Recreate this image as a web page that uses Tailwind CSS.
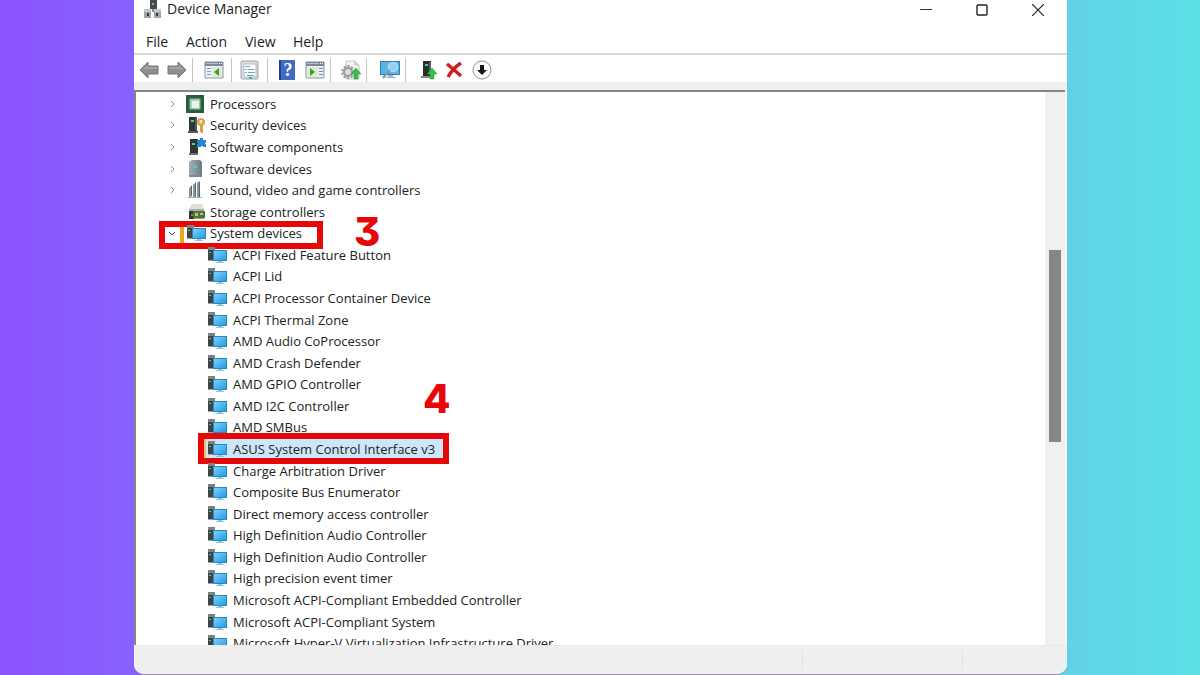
<!DOCTYPE html>
<html lang="en">
<head>
<meta charset="utf-8">
<meta name="viewport" content="width=device-width, initial-scale=1">
<title>Device Manager</title>
<script src="https://cdn.jsdelivr.net/npm/@tailwindcss/browser@4"></script>
</head>
<body class="h-screen overflow-hidden bg-linear-to-r/srgb from-[#8c52ff] to-[#5ce1e6] pr-[133px] pb-px pl-[134px] font-['Open_Sans','Noto_Sans',sans-serif] text-sm text-[#222]">
<svg class="absolute size-0" aria-hidden="true">
  <defs>
    <linearGradient id="screen" x1="0" y1="0" x2="1" y2="1"><stop offset="0" stop-color="#7cd0fa"/><stop offset="1" stop-color="#269be6"/></linearGradient>
    <linearGradient id="steel" x1="0" y1="0" x2="1" y2="0"><stop offset="0" stop-color="#a3adb4"/><stop offset="1" stop-color="#6f7b83"/></linearGradient>
    <symbol id="system" viewBox="0 0 20 18">
      <path d="M1 1h7v3H6v11H1z" fill="#3d4549"/><path d="M1 1h7v3H1z" fill="#7b8580"/><path d="M2 6h2v1H2z" fill="#62c9a2"/><path d="M1 14h5v1H1z" fill="#9aa3a6"/>
      <path d="M6 4h14v11H6z" fill="#2788bd"/><path d="M7 5h12v9H7z" fill="url(#screen)"/><path d="M11 15h4v1h2v1H9v-1h2z" fill="#8fc4dd"/>
    </symbol>
    <symbol id="processor" viewBox="0 0 20 18">
      <path d="M0 0h18v18H0z" fill="#2b6240"/><path d="M1 1h16v16H1z" fill="none" stroke="#23573a" stroke-width="2" stroke-dasharray="1 1"/><path d="M4 4h10v10H4z" fill="#b4d2c4" stroke="#8cb19c"/><path d="M6 6h7v7H6z" fill="#eaf4ef"/>
    </symbol>
    <symbol id="security" viewBox="0 0 20 18">
      <path d="M3 1h8v15H3z" fill="#303638"/><path d="M2 15h10v2H2z" fill="#555b5c"/><path d="M5 4h3v2H5z" fill="#4ad08b"/><path d="M9 2h2v12H9z" fill="#555d5e"/>
      <circle cx="15" cy="6" r="3" fill="#f2ca76" stroke="#d9a34f" stroke-width="2"/><path d="M14 9h3v8h-2v-1h-1z" fill="#d99f47"/><circle cx="15" cy="5" r="1" fill="#fff"/>
    </symbol>
    <symbol id="component" viewBox="0 0 20 18">
      <path d="M4 1h8v15H4z" fill="#303638"/><path d="M3 15h9v2H3z" fill="#6a7070"/><path d="M6 5h3v2H6z" fill="#4ad08b"/>
      <path d="M11 2h3V0h3v2h3v3h-1v1h1v3h-3V8h-2v1h-4V6h1V5h-1z" fill="#2686d2"/>
    </symbol>
    <symbol id="software" viewBox="0 0 20 18">
      <path d="M4 1l2-1h8l2 2v15H3V2z" fill="url(#steel)"/><path d="M3 15h13v2H3z" fill="#7b868d"/><path d="M7 5h4v3H7z" fill="#5ec5ba"/>
    </symbol>
    <symbol id="sound" viewBox="0 0 20 18">
      <path d="M3 7l3-3v11l-3 2zM7 4l3-3v15H7zM11 2l3-2v16h-3z" fill="#8797a1"/><path d="M5 5h1v10H5zM9 2h1v13H9zM13 1h1v15h-1z" fill="#566872"/><path d="M2 16h14v1H2z" fill="#a6adb1"/>
    </symbol>
    <symbol id="storage" viewBox="0 0 20 18">
      <path d="M5 2l2-1h9l2 5H3z" fill="#dfe0dc"/><path d="M3 6h15v3H3z" fill="#aab1a8"/><path d="M3 8h5v8H3z" fill="#2c3832"/><path d="M7 8h12v7H7z" fill="#3e7a43"/><path d="M9 10h3v3H9zM14 10h3v2h-3z" fill="#e1b85b"/><path d="M8 15h10v1H8z" fill="#d09437"/><path d="M5 11h2v2H5z" fill="#e25140"/>
    </symbol>
    <symbol id="chevron" viewBox="0 0 8 8"><path d="M3 1l3 3-3 3" fill="none" stroke="#8a8a8a"/></symbol>
    <symbol id="arrow" viewBox="0 0 20 18"><path d="M1 9l8-8v4h10v8H9v4z" fill="#8e8e8e" stroke="#777"/><path d="M3 9l5-5v2h10v2H8z" fill="#a5a5a5"/></symbol>
    <symbol id="console" viewBox="0 0 20 18"><path d="M1 1h18v16H1z" fill="#eef2f5" stroke="#8793a3"/><path d="M1 1h18v4H1z" fill="#7b889b"/><path d="M2 2h12v1H2z" fill="#b7c2cf"/><path d="M15 2h1v1h-1zM17 2h1v1h-1z" fill="#fff"/></symbol>
    <symbol id="up" viewBox="0 0 10 12"><path d="M5 0l5 6H7v5H3V6H0z" fill="#3dbb4b" stroke="#279737" stroke-width=".5"/></symbol>
  </defs>
</svg>
<main class="flex h-full flex-col overflow-hidden rounded-b-[10px] bg-white shadow-[0_1px_0_#9c94a3]">
  <header class="flex h-7 shrink-0 items-start justify-between pl-2">
    <div class="flex items-center gap-1">
      <svg class="h-[18px] w-5" viewBox="0 0 20 18"><path d="M8 0h7v9H8z" fill="#454b4e"/><path d="M10 3h2v2h-2z" fill="#83b7a4"/><path d="M10 9h2v3h-2z" fill="#888"/><path d="M2 9h7v9H2zM12 9h7v9h-7z" fill="#a2a5a8"/><path d="M2 9h7v3H2zM12 9h7v3h-7z" fill="#c4c7c9"/><path d="M5 13h2v3H5zM14 13h2v3h-2z" fill="#343a3d"/></svg>
      <h1 class="pl-px leading-[18px]">Device Manager</h1>
    </div>
    <div class="flex pr-px">
      <button aria-label="Minimize" class="flex h-5 w-14 items-center justify-center"><svg class="size-3" viewBox="0 0 12 12"><path d="M0 5.500h12" stroke="#333"/></svg></button>
      <button aria-label="Maximize" class="flex h-5 w-14 items-center justify-center"><svg class="size-3" viewBox="0 0 12 12"><rect x="1" y="1" width="10" height="10" rx="1" fill="none" stroke="#222" stroke-width="1.4"/></svg></button>
      <button aria-label="Close" class="flex h-5 w-14 items-center justify-center"><svg class="size-3" viewBox="0 0 12 12"><path d="M0 0l12 12M12 0L0 12" stroke="#222" stroke-width="1.2"/></svg></button>
    </div>
  </header>
  <nav class="flex h-[27px] shrink-0 items-center gap-5 border-b-2 border-[#d8d8d8] pt-[3px] pl-3 leading-5" aria-label="Menu">
    <button class="w-5">File</button><button class="w-[39px]">Action</button><button class="w-[28px]">View</button><button class="w-[28px]">Help</button>
  </nav>
  <div class="flex h-[27px] shrink-0 items-center pt-[3px] pl-[5px]" role="toolbar" aria-label="Tools">
    <button aria-label="Back"><svg class="h-[18px] w-5"><use href="#arrow"/></svg></button>
    <button aria-label="Forward" class="ml-2"><svg class="h-[18px] w-5 -scale-x-100"><use href="#arrow"/></svg></button>
    <span class="ml-[5px] h-6 w-px bg-[#c4c4c4]"></span>
    <button aria-label="Show console tree" class="ml-[11px]"><svg class="h-[18px] w-5" viewBox="0 0 20 18"><use href="#console"/><path d="M3 7h4v1H3zM3 10h4v1H3zM3 13h4v1H3z" fill="#829bc0"/><path d="M8 6h10v10H8z" fill="#dceece"/><path d="M15 7v8l-5-4z" fill="#3f9a38"/></svg></button>
    <span class="ml-[7px] h-6 w-px bg-[#c4c4c4]"></span>
    <button aria-label="Properties" class="ml-2"><svg class="h-5 w-5" viewBox="0 0 20 20"><rect x="1" y="1" width="17" height="18" rx="1" fill="#d9dde0" stroke="#a0a6aa"/><path d="M4 4h12v13H4z" fill="#fff" stroke="#b4c0c8"/><path d="M5 6h5v1H5zM5 9h2v1H5zM8 9h7v1H8zM5 12h2v1H5zM8 12h7v1H8zM7 15h7v1H7z" fill="#70aabb"/><path d="M9 17h3v2H9z" fill="#37b3bc"/></svg></button>
    <span class="ml-[7px] h-6 w-px bg-[#c4c4c4]"></span>
    <button aria-label="Help topics" class="ml-[11px] flex h-5 w-4 items-center justify-center border-l-2 border-[#213f93] bg-[#4269c6] font-['Liberation_Serif',serif] text-lg leading-5 font-bold text-white">?</button>
    <button aria-label="Show action pane" class="ml-[10px]"><svg class="h-[18px] w-5" viewBox="0 0 20 18"><use href="#console"/><path d="M2 6h11v10H2z" fill="#dceece"/><path d="M5 7v8l5-4z" fill="#3f9a38"/><path d="M14 7h4v1h-4zM14 10h4v1h-4zM14 13h4v1h-4z" fill="#7089b1"/></svg></button>
    <span class="ml-[5px] h-6 w-px bg-[#c4c4c4]"></span>
    <button aria-label="Update driver" class="ml-2.5"><svg class="h-5 w-5" viewBox="0 0 20 20"><path d="M5 1h9l4 4v14H5z" fill="#f4f4f4" stroke="#c6c6c6"/><path d="M14 1v4h4" fill="#ddd" stroke="#bbb"/><circle cx="7" cy="12" r="5" fill="none" stroke="#9da1a3" stroke-width="4" stroke-dasharray="2 1.2"/><circle cx="7" cy="12" r="4" fill="#ddd" stroke="#979c9f" stroke-width="2"/><use href="#up" x="10" y="8" width="10" height="12"/></svg></button>
    <span class="ml-[5px] h-6 w-px bg-[#c4c4c4]"></span>
    <button aria-label="Scan for hardware changes" class="ml-3"><svg class="h-5 w-[22px]" viewBox="0 0 22 20"><path d="M1 1h20v14H1z" fill="#2f7fb2"/><path d="M2 2h18v12H2z" fill="#5ab4e4"/><path d="M9 15h5v2h3v1H7v-1h2z" fill="#9bb4c3"/><circle cx="14" cy="7" r="4.500" fill="#8ad2fa" stroke="#bad8e8" stroke-width="1.500"/><path d="M11 10l-7 8" stroke="#7998a9" stroke-width="2"/></svg></button>
    <span class="ml-[4px] h-6 w-px bg-[#c4c4c4]"></span>
    <button aria-label="Enable device" class="ml-[13px]"><svg class="h-5 w-[18px]" viewBox="0 0 18 20"><path d="M4 1h8v15H4z" fill="#292e2e"/><path d="M2 16h10v2H2z" fill="#888"/><path d="M6 4h3v2H6z" fill="#4ad08b"/><path d="M10 2h2v12h-2z" fill="#596160"/><use href="#up" x="8" y="8" width="10" height="12"/></svg></button>
    <button aria-label="Uninstall device" class="ml-2"><svg class="h-4 w-[18px]" viewBox="0 0 18 16"><path d="M2 2q5 4 14 12M16 1Q8 6 3 15" fill="none" stroke="#d21b27" stroke-width="3.500"/></svg></button>
    <button aria-label="Disable device" class="ml-[9px]"><svg class="size-5" viewBox="0 0 20 20"><circle cx="10" cy="10" r="9" fill="#fff" stroke="#909090"/><path d="M8 5h4v5h3l-5 5-5-5h3z" fill="#161616"/></svg></button>
  </div>
  <div class="h-2 shrink-0 bg-[#efefef]"></div>
  <section class="mr-[2px] flex min-h-0 flex-1 overflow-hidden border-t-2 border-l-2 border-[#858585]">
    <ul role="tree" aria-label="Devices" class="grid h-[562px] flex-1 grid-rows-[repeat(26,minmax(0,1fr))] pt-px text-[13px]" id="tree"></ul>
    <div class="w-5 bg-[#f0f0f0] px-1 pt-[158px]" role="scrollbar" aria-controls="tree" aria-valuenow="40"><div class="h-[192px] bg-[#868686]"></div></div>
  </section>
  <footer class="flex h-[29px] shrink-0 justify-end border-t border-[#e9e9e9] bg-[#efefef] pt-1 pb-1">
    <span class="w-40 border-l border-[#e2e2e2]"></span><span class="w-[105px] border-l border-[#e2e2e2]"></span>
  </footer>
</main>
<script>
  const groups = [['Processors', 'processor'], ['Security devices', 'security'], ['Software components', 'component'], ['Software devices', 'software'], ['Sound, video and game controllers', 'sound'], ['Storage controllers', 'storage'], ['System devices', 'system']];
  const devices = ['ACPI Fixed Feature Button', 'ACPI Lid', 'ACPI Processor Container Device', 'ACPI Thermal Zone', 'AMD Audio CoProcessor', 'AMD Crash Defender', 'AMD GPIO Controller', 'AMD I2C Controller', 'AMD SMBus', 'ASUS System Control Interface v3', 'Charge Arbitration Driver', 'Composite Bus Enumerator', 'Direct memory access controller', 'High Definition Audio Controller', 'High Definition Audio Controller', 'High precision event timer', 'Microsoft ACPI-Compliant Embedded Controller', 'Microsoft ACPI-Compliant System', 'Microsoft Hyper-V Virtualization Infrastructure Driver'];
  const number = "absolute font-['Inter',sans-serif] text-[40px] leading-7 font-extrabold text-[#e60808] [font-feature-settings:'cv09']";
  const step3 = `<span class="absolute -top-px left-[23px] flex h-[28px] w-[164px] border-6 border-[#e60808]"><span class="ml-[15px] w-1 bg-[#f3a51c]"></span></span><b class="${number} -top-1 left-[218px]">3</b>`;
  const step4 = `<span class="absolute -top-[5px] left-[62px] h-[31px] w-[251px] border-6 border-[#e60808]"></span><b class="${number} -top-[53px] left-[287px]">4</b>`;
  const icon = (id, cls) => `<svg class="${cls}"><use href="#${id}"/></svg>`;
  document.getElementById('tree').innerHTML =
    groups.map(([name, id], i) => `<li role="treeitem" aria-level="1" class="relative flex items-center pl-8">
      ${i === 6 ? step3 : ''}
      <span class="relative flex w-[18px]">${i === 6 ? icon('chevron', 'size-2 rotate-90 brightness-50') : i < 5 ? icon('chevron', 'size-2') : ''}</span>
      ${icon(id, 'relative h-[18px] w-5')}<span class="relative pl-1 leading-5">${name}</span></li>`).join('') +
    devices.map((name, i) => `<li role="treeitem" aria-level="2" class="relative flex items-center pl-[71px]">
      ${i === 9 ? '<span class="absolute inset-y-0 left-[68px] w-[239px] border-l-2 border-[#f3bd61] bg-[#cce6fc]"></span>' + step4 : ''}
      ${icon('system', 'relative h-[18px] w-5')}<span class="relative pl-[6px] leading-5">${name}</span></li>`).join('');
</script>
</body>
</html>
